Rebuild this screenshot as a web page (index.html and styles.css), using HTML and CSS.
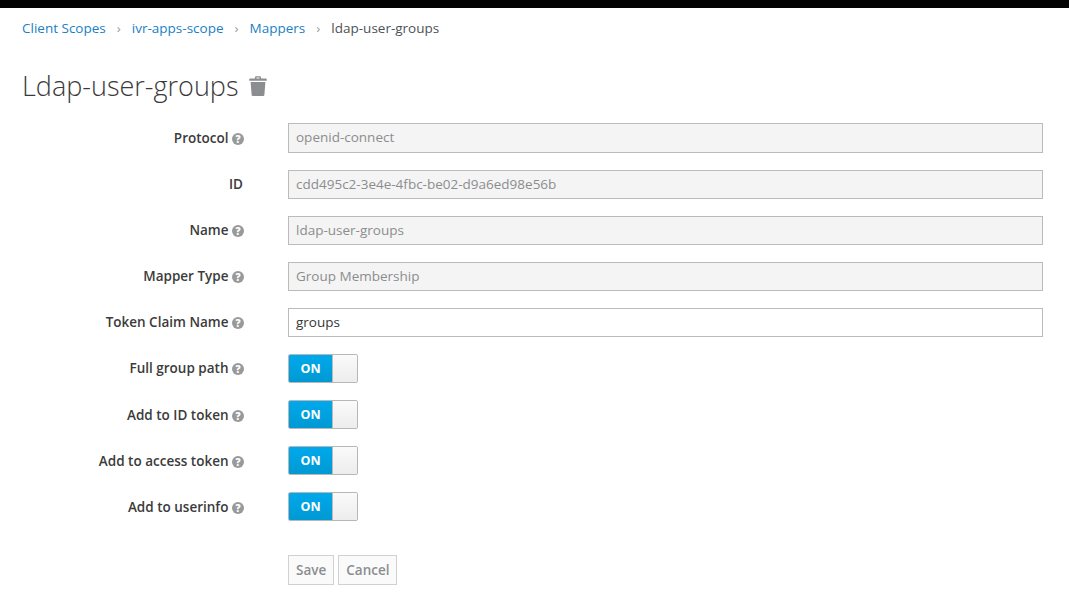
FILE: index.html
```html
<!DOCTYPE html>
<html lang="en">
<head>
    <meta charset="UTF-8">
    <title>Ldap-user-groups</title>
    <link rel="stylesheet" href="styles.css">
</head>
<body>
    <div class="topbar"></div>
    <div class="container">
        <ol class="breadcrumb">
            <li><a href="#">Client Scopes</a></li>
            <li><a href="#">ivr-apps-scope</a></li>
            <li><a href="#">Mappers</a></li>
            <li class="active">ldap-user-groups</li>
        </ol>

        <h1>Ldap-user-groups
            <svg class="trash" viewBox="0 0 18 20" width="18" height="20">
                <path d="M6 2.500V1.200A1 1 0 0 1 7 .2h4a1 1 0 0 1 1 1v1.300h4.800a1 1 0 0 1 1 1v1.300H.2V3.500a1 1 0 0 1 1-1zM7.500 2.500h3V1.600h-3z" fill-rule="evenodd"/>
                <path d="M1.600 6h14.800l-1 12.700a1.300 1.300 0 0 1-1.300 1.200H3.900a1.300 1.300 0 0 1-1.300-1.200z"/>
            </svg>
        </h1>

        <form class="form">
            <div class="row">
                <label>Protocol <span class="help">?</span></label>
                <input class="field" type="text" value="openid-connect" disabled>
            </div>
            <div class="row">
                <label class="no-help">ID</label>
                <input class="field" type="text" value="cdd495c2-3e4e-4fbc-be02-d9a6ed98e56b" disabled>
            </div>
            <div class="row">
                <label>Name <span class="help">?</span></label>
                <input class="field" type="text" value="ldap-user-groups" disabled>
            </div>
            <div class="row">
                <label>Mapper Type <span class="help">?</span></label>
                <input class="field" type="text" value="Group Membership" disabled>
            </div>
            <div class="row">
                <label>Token Claim Name <span class="help">?</span></label>
                <input class="field" type="text" value="groups">
            </div>
            <div class="row">
                <label>Full group path <span class="help">?</span></label>
                <div class="toggle"><span class="on">ON</span><span class="knob"></span></div>
            </div>
            <div class="row">
                <label>Add to ID token <span class="help">?</span></label>
                <div class="toggle"><span class="on">ON</span><span class="knob"></span></div>
            </div>
            <div class="row">
                <label>Add to access token <span class="help">?</span></label>
                <div class="toggle"><span class="on">ON</span><span class="knob"></span></div>
            </div>
            <div class="row">
                <label>Add to userinfo <span class="help">?</span></label>
                <div class="toggle"><span class="on">ON</span><span class="knob"></span></div>
            </div>
            <div class="buttons">
                <button type="button">Save</button>
                <button type="button">Cancel</button>
            </div>
        </form>
    </div>
</body>
</html>
```

FILE: styles.css
```css
body {
    font-family: "Open Sans", sans-serif;
    font-size: 13.5px;
    line-height: 20px;
    margin: 0;
    background-color: #fff;
    color: #363636;
}
.topbar {
    height: 8px;
    background-color: #030303;
}
.container {
    padding: 10px 26px 0 22px;
}
.breadcrumb {
    display: flex;
    list-style: none;
    margin: 0;
    padding: 0;
    height: 20px;
}
.breadcrumb li + li::before {
    content: "\203A";
    color: #9c9c9c;
    padding: 0 11px;
}
.breadcrumb a {
    color: #1a7fc4;
    text-decoration: none;
}
.breadcrumb .active {
    color: #4d5258;
}
h1 {
    display: flex;
    align-items: center;
    gap: 11px;
    font-size: 27px;
    font-weight: 300;
    line-height: 32px;
    margin: 32px 0 0;
    height: 32px;
    color: #3a3a3a;
}
.trash {
    fill: #8b8d8f;
}
.form {
    margin-top: 21px;
}
.row {
    display: flex;
    align-items: center;
    height: 29px;
    margin-bottom: 17px;
}
.row:first-child {
    height: 30px;
}
label {
    width: 222px;
    margin-right: 44px;
    padding-bottom: 2px;
    text-align: right;
    font-weight: 600;
    color: #3b3b3b;
}
.row:first-child label,
.row:nth-child(n+7) label {
    padding-bottom: 0;
}
.no-help {
    width: 221px;
    margin-right: 45px;
}
.help {
    display: inline-block;
    width: 12px;
    height: 12px;
    border-radius: 50%;
    background-color: #999;
    color: #fff;
    font-size: 10px;
    font-weight: 800;
    line-height: 12px;
    text-align: center;
}
.field {
    flex: 1;
    height: 100%;
    box-sizing: border-box;
    padding: 0 7px 2px;
    border: 1px solid #bbb;
    font-family: inherit;
    font-size: 13.5px;
    color: #363636;
    background-color: #fff;
}
.field:disabled {
    background-color: #f4f4f4;
    color: #8b8d8f;
    -webkit-text-fill-color: #8b8d8f;
}
.toggle {
    display: flex;
    width: 70px;
    height: 100%;
    box-sizing: border-box;
    border: 1px solid #b7b7b7;
    border-radius: 2px;
    overflow: hidden;
}
.on {
    width: 43px;
    background: linear-gradient(#00a9ec, #0099d3);
    color: #fff;
    font-size: 12.5px;
    font-weight: 700;
    line-height: 27px;
    text-align: center;
}
.knob {
    flex: 1;
    border-left: 1px solid #bbb;
    background: linear-gradient(#fafafa, #ededed);
}
.buttons {
    display: flex;
    gap: 4px;
    margin: 34px 0 0 266px;
}
button {
    height: 30px;
    padding: 0 7px;
    border: 1px solid #d1d1d1;
    background-color: #fafafa;
    color: #8b8d8f;
    font-family: inherit;
    font-size: 13.5px;
    font-weight: 600;
}
```
